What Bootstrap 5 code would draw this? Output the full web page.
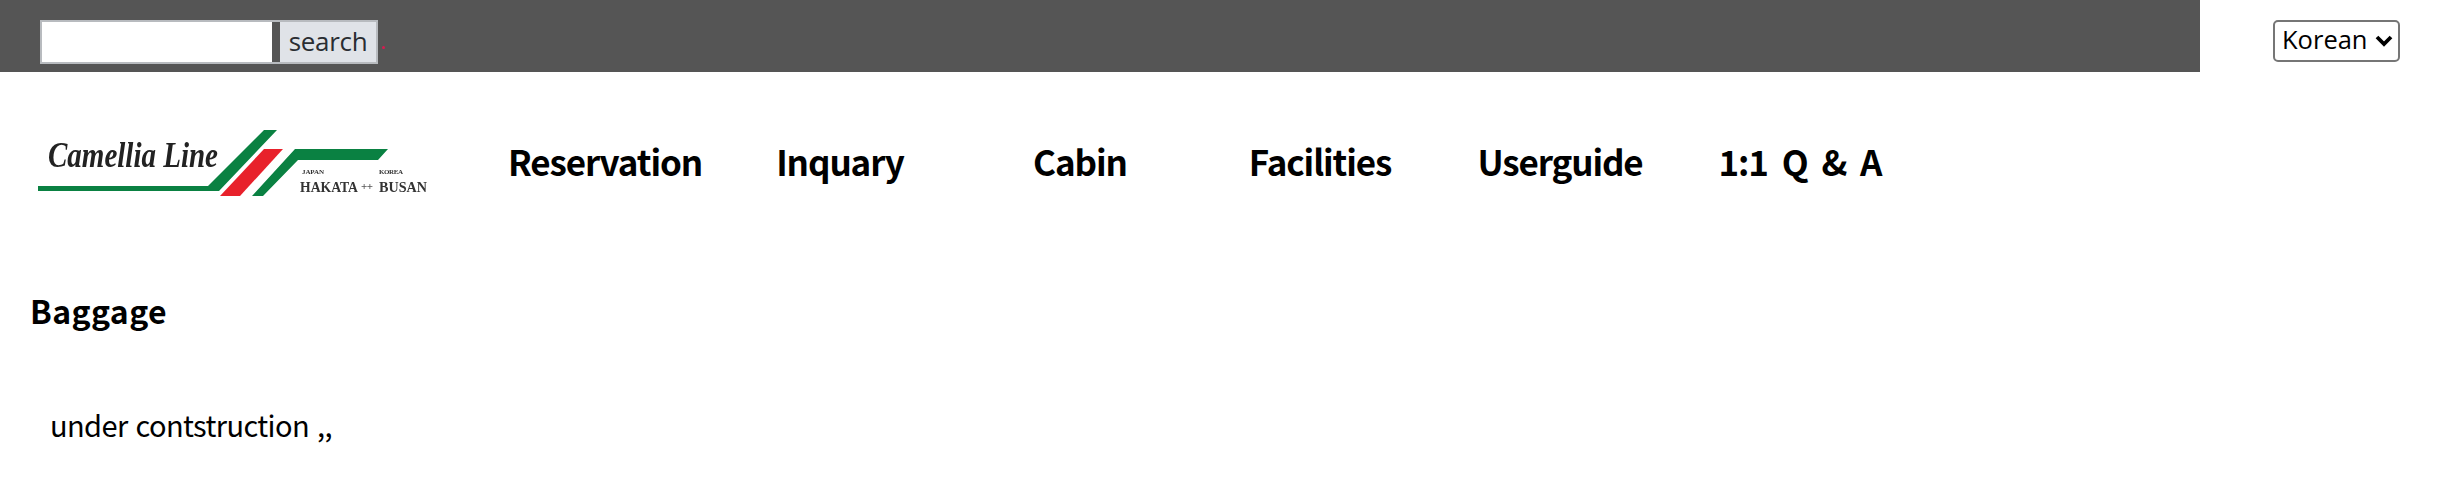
<!DOCTYPE html>
<html lang="en">
<head>
<meta charset="utf-8">
<title>Camellia Line</title>
<link href="https://cdn.jsdelivr.net/npm/bootstrap@5.3.0/dist/css/bootstrap.min.css" rel="stylesheet">
<style>
body{font-family:"Noto Sans CJK KR","Noto Sans",sans-serif;color:#000;background:#fff;overflow:hidden}
.cl-topbar{width:2200px;height:72px;background:#555;padding:20px 0 0 40px}
.cl-search{width:338px;height:44px;border:2px solid #b8bbbf;background:#555}
.cl-search input{width:230px;height:40px;border:0;background:#fff;padding:0;outline:0}
.cl-search button{width:96px;height:40px;border:0;margin-left:8px;background:#e0e3e8;color:#2a2d32;font-family:"Open Sans",sans-serif;font-size:26px;letter-spacing:-.3px;line-height:36px;padding:0 0 3px}
.cl-dot{width:3px;height:3px;border-radius:50%;background:#d81b50;margin:26px 0 0 4px}
.cl-lang{margin:20px 0 0 73px}
.cl-lang select{width:127px;height:42px;font-family:"Open Sans",sans-serif;font-size:25.5px;line-height:1;border:2px solid #767676;border-radius:5px;background:#fff;color:#000;padding:0 0 3px 7px;appearance:none;background-image:url("data:image/svg+xml,%3Csvg xmlns='http://www.w3.org/2000/svg' viewBox='0 0 18 12'%3E%3Cpath d='M2 2l7 7 7-7' fill='none' stroke='%23000' stroke-width='3.8'/%3E%3C/svg%3E");background-repeat:no-repeat;background-position:right 5px center;background-size:18px 12px}
.cl-head{height:176px;padding:56px 0 0 37px}
.cl-logo{width:392px;height:74px;display:block;filter:blur(.55px)}
.cl-menu{margin:0 0 0 61px;padding:0;list-style:none;height:74px}
.cl-menu li{width:240px;text-align:center;font-size:35px;font-weight:700;letter-spacing:-1.1px;word-spacing:7px;line-height:65px}
.cl-menu li:first-child{width:230px}
.cl-title{font-size:32px;font-weight:700;letter-spacing:.4px;line-height:44px;margin:0 0 0 30px;padding-top:40px;height:84px}
.cl-text{font-size:29px;font-weight:400;letter-spacing:-.6px;word-spacing:2px;line-height:40px;margin:0 0 0 50px;padding-top:72px}
</style>
</head>
<body>
<div class="d-flex">
  <div class="cl-topbar d-flex">
    <form class="cl-search d-flex"><input type="text" aria-label="search"><button type="button">search</button></form>
    <div class="cl-dot"></div>
  </div>
  <div class="cl-lang"><select aria-label="language"><option>Korean</option></select></div>
</div>
<div class="cl-head d-flex">
  <svg class="cl-logo flex-shrink-0" viewBox="37 128 392 74" xmlns="http://www.w3.org/2000/svg">
    <text x="48" y="167" font-family="Liberation Serif" font-style="italic" font-weight="700" font-size="35" fill="#222" textLength="170" lengthAdjust="spacingAndGlyphs">Camellia Line</text>
    <polygon points="38,186 208,186 264,130 277,130 219,191 38,191" fill="#0a8142"/>
    <polygon points="264,149 283,149 240,196 220,196" fill="#e8212b"/>
    <polygon points="295,149 388,149 378,160 298,160 263,196 252,196" fill="#0a8142"/>
    <text x="302" y="174" font-family="Liberation Serif" font-weight="700" font-size="7" fill="#333" textLength="22">JAPAN</text>
    <text x="379" y="174" font-family="Liberation Serif" font-weight="700" font-size="7" fill="#333" textLength="24">KOREA</text>
    <text x="300" y="192" font-family="Liberation Serif" font-weight="700" font-size="15" fill="#333" textLength="58" lengthAdjust="spacingAndGlyphs">HAKATA</text>
    <text x="361" y="190" font-family="Liberation Serif" font-weight="700" font-size="11" fill="#555" textLength="12">++</text>
    <text x="379" y="192" font-family="Liberation Serif" font-weight="700" font-size="15" fill="#333" textLength="48" lengthAdjust="spacingAndGlyphs">BUSAN</text>
  </svg>
  <ul class="cl-menu d-flex">
    <li>Reservation</li><li>Inquary</li><li>Cabin</li><li>Facilities</li><li>Userguide</li><li>1:1 Q &amp; A</li>
  </ul>
</div>
<h1 class="cl-title">Baggage</h1>
<p class="cl-text mb-0">under contstruction ,,</p>
<script src="https://cdn.jsdelivr.net/npm/bootstrap@5.3.0/dist/js/bootstrap.bundle.min.js"></script>
</body>
</html>
